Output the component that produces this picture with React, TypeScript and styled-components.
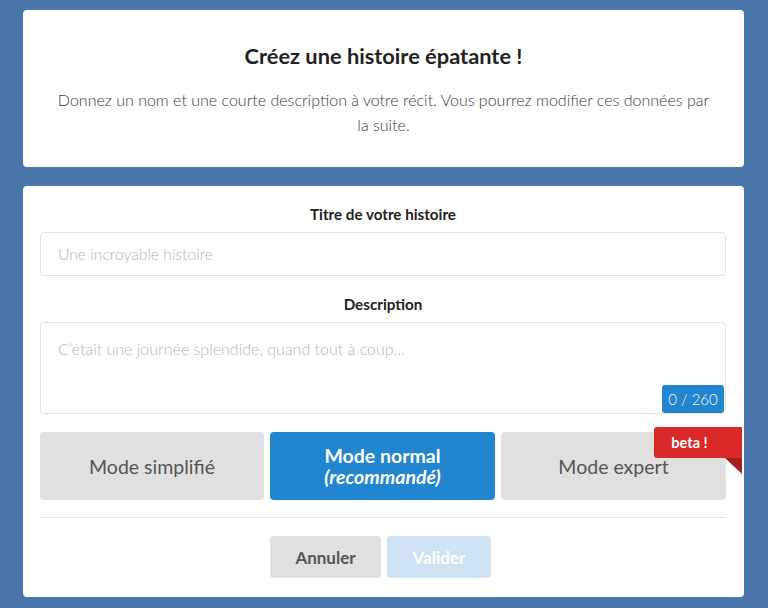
import React from "react";
import styled, { createGlobalStyle } from "styled-components";

const GlobalStyle = createGlobalStyle`
  html, body {
    margin: 0;
    padding: 0;
    background: #4a76ab;
    font-family: Lato, "Noto Sans", "Liberation Sans", sans-serif;
  }
  * { box-sizing: border-box; }
`;

const Page = styled.div`
  width: 768px;
  height: 608px;
  padding: 10px 24px 0 23px;
  display: flex;
  flex-direction: column;
  gap: 19px;
`;

const Card = styled.section`
  background: #fff;
  border-radius: 4px;
`;

const IntroCard = styled(Card)`
  padding: 31px 30px 30px;
  text-align: center;
`;

const Title = styled.h1`
  margin: 0;
  font-size: 21.8px;
  line-height: 30px;
  font-weight: 700;
  color: #222;
`;

const Lead = styled.p`
  margin: 16px 0 0;
  font-size: 16px;
  line-height: 25px;
  font-weight: 300;
  color: #3a3a3a;
`;

const FormCard = styled(Card)`
  padding: 18px 18px 19px 17px;
  display: flex;
  flex-direction: column;
`;

const Label = styled.label<{ $top?: number }>`
  display: block;
  text-align: center;
  font-size: 15.2px;
  line-height: 20px;
  font-weight: 700;
  color: #222;
  margin-top: ${(p) => p.$top ?? 0}px;
  margin-bottom: 8px;
`;

const fieldStyle = `
  width: 100%;
  border: 1px solid #e2e2e2;
  border-radius: 4px;
  font-family: Lato, "Noto Sans", sans-serif;
  font-weight: 300;
  color: #333;
  outline: none;
  &::placeholder { color: #b5b5b5; }
`;

const TextInput = styled.input`
  ${fieldStyle}
  height: 44px;
  padding: 0 17px;
  font-size: 15.7px;
`;

const AreaWrap = styled.div`
  position: relative;
`;

const TextArea = styled.textarea`
  ${fieldStyle}
  display: block;
  height: 92px;
  padding: 16px 17px;
  font-size: 16px;
  line-height: 20px;
  resize: none;
`;

const Counter = styled.span`
  position: absolute;
  right: 2px;
  bottom: 1px;
  width: 62px;
  height: 28px;
  display: flex;
  align-items: center;
  justify-content: center;
  background: #2185d0;
  color: #fff;
  border-radius: 3px;
  font-size: 15px;
  font-weight: 300;
`;

const Modes = styled.div`
  margin-top: 18px;
  display: grid;
  grid-template-columns: 224px 225px 225px;
  gap: 6px;
`;

const ModeButton = styled.button<{ $active?: boolean }>`
  position: relative;
  height: 68px;
  border: none;
  border-radius: 4px;
  background: ${(p) => (p.$active ? "#2185d0" : "#e0e0e0")};
  color: ${(p) => (p.$active ? "#fff" : "#555")};
  font-family: Lato, "Noto Sans", sans-serif;
  font-size: 19.5px;
  font-weight: ${(p) => (p.$active ? 700 : 400)};
  line-height: 21px;
  display: flex;
  flex-direction: column;
  align-items: center;
  justify-content: center;
  em { font-style: italic; }
`;

const Ribbon = styled.span`
  position: absolute;
  top: -5px;
  right: -16px;
  width: 88px;
  height: 31px;
  padding-right: 17px;
  background: #db2828;
  color: #fff;
  border-radius: 3px 0 0 3px;
  font-size: 14.5px;
  font-weight: 700;
  display: flex;
  align-items: center;
  justify-content: center;
  &::after {
    content: "";
    position: absolute;
    top: 100%;
    right: 0;
    border-style: solid;
    border-width: 0 17px 16px 0;
    border-color: transparent #a51d1d transparent transparent;
  }
`;

const Divider = styled.hr`
  margin: 17px 0 0;
  border: none;
  border-top: 1px solid #e3e3e3;
`;

const Actions = styled.div`
  margin-top: 18px;
  display: flex;
  justify-content: center;
  gap: 6px;
  padding-right: 5px;
`;

const ActionButton = styled.button<{ $primary?: boolean }>`
  height: 42px;
  width: ${(p) => (p.$primary ? 104 : 111)}px;
  padding: 0;
  border: none;
  border-radius: 4px;
  background: ${(p) => (p.$primary ? "#d0e3f4" : "#e0e0e0")};
  color: ${(p) => (p.$primary ? "#fff" : "#555")};
  font-family: Lato, "Noto Sans", sans-serif;
  font-size: 17px;
  font-weight: 700;
`;

export default function App() {
  return (
    <>
      <GlobalStyle />
      <Page>
        <IntroCard>
          <Title>Créez une histoire épatante !</Title>
          <Lead>
            Donnez un nom et une courte description à votre récit. Vous pourrez modifier ces données par
            la suite.
          </Lead>
        </IntroCard>
        <FormCard>
          <Label>Titre de votre histoire</Label>
          <TextInput placeholder="Une incroyable histoire" />
          <Label $top={18}>Description</Label>
          <AreaWrap>
            <TextArea placeholder="C’était une journée splendide, quand tout à coup..." />
            <Counter>0 / 260</Counter>
          </AreaWrap>
          <Modes>
            <ModeButton>Mode simplifié</ModeButton>
            <ModeButton $active>
              <span>Mode normal</span>
              <em>(recommandé)</em>
            </ModeButton>
            <ModeButton>
              Mode expert
              <Ribbon>beta !</Ribbon>
            </ModeButton>
          </Modes>
          <Divider />
          <Actions>
            <ActionButton>Annuler</ActionButton>
            <ActionButton $primary>Valider</ActionButton>
          </Actions>
        </FormCard>
      </Page>
    </>
  );
}
